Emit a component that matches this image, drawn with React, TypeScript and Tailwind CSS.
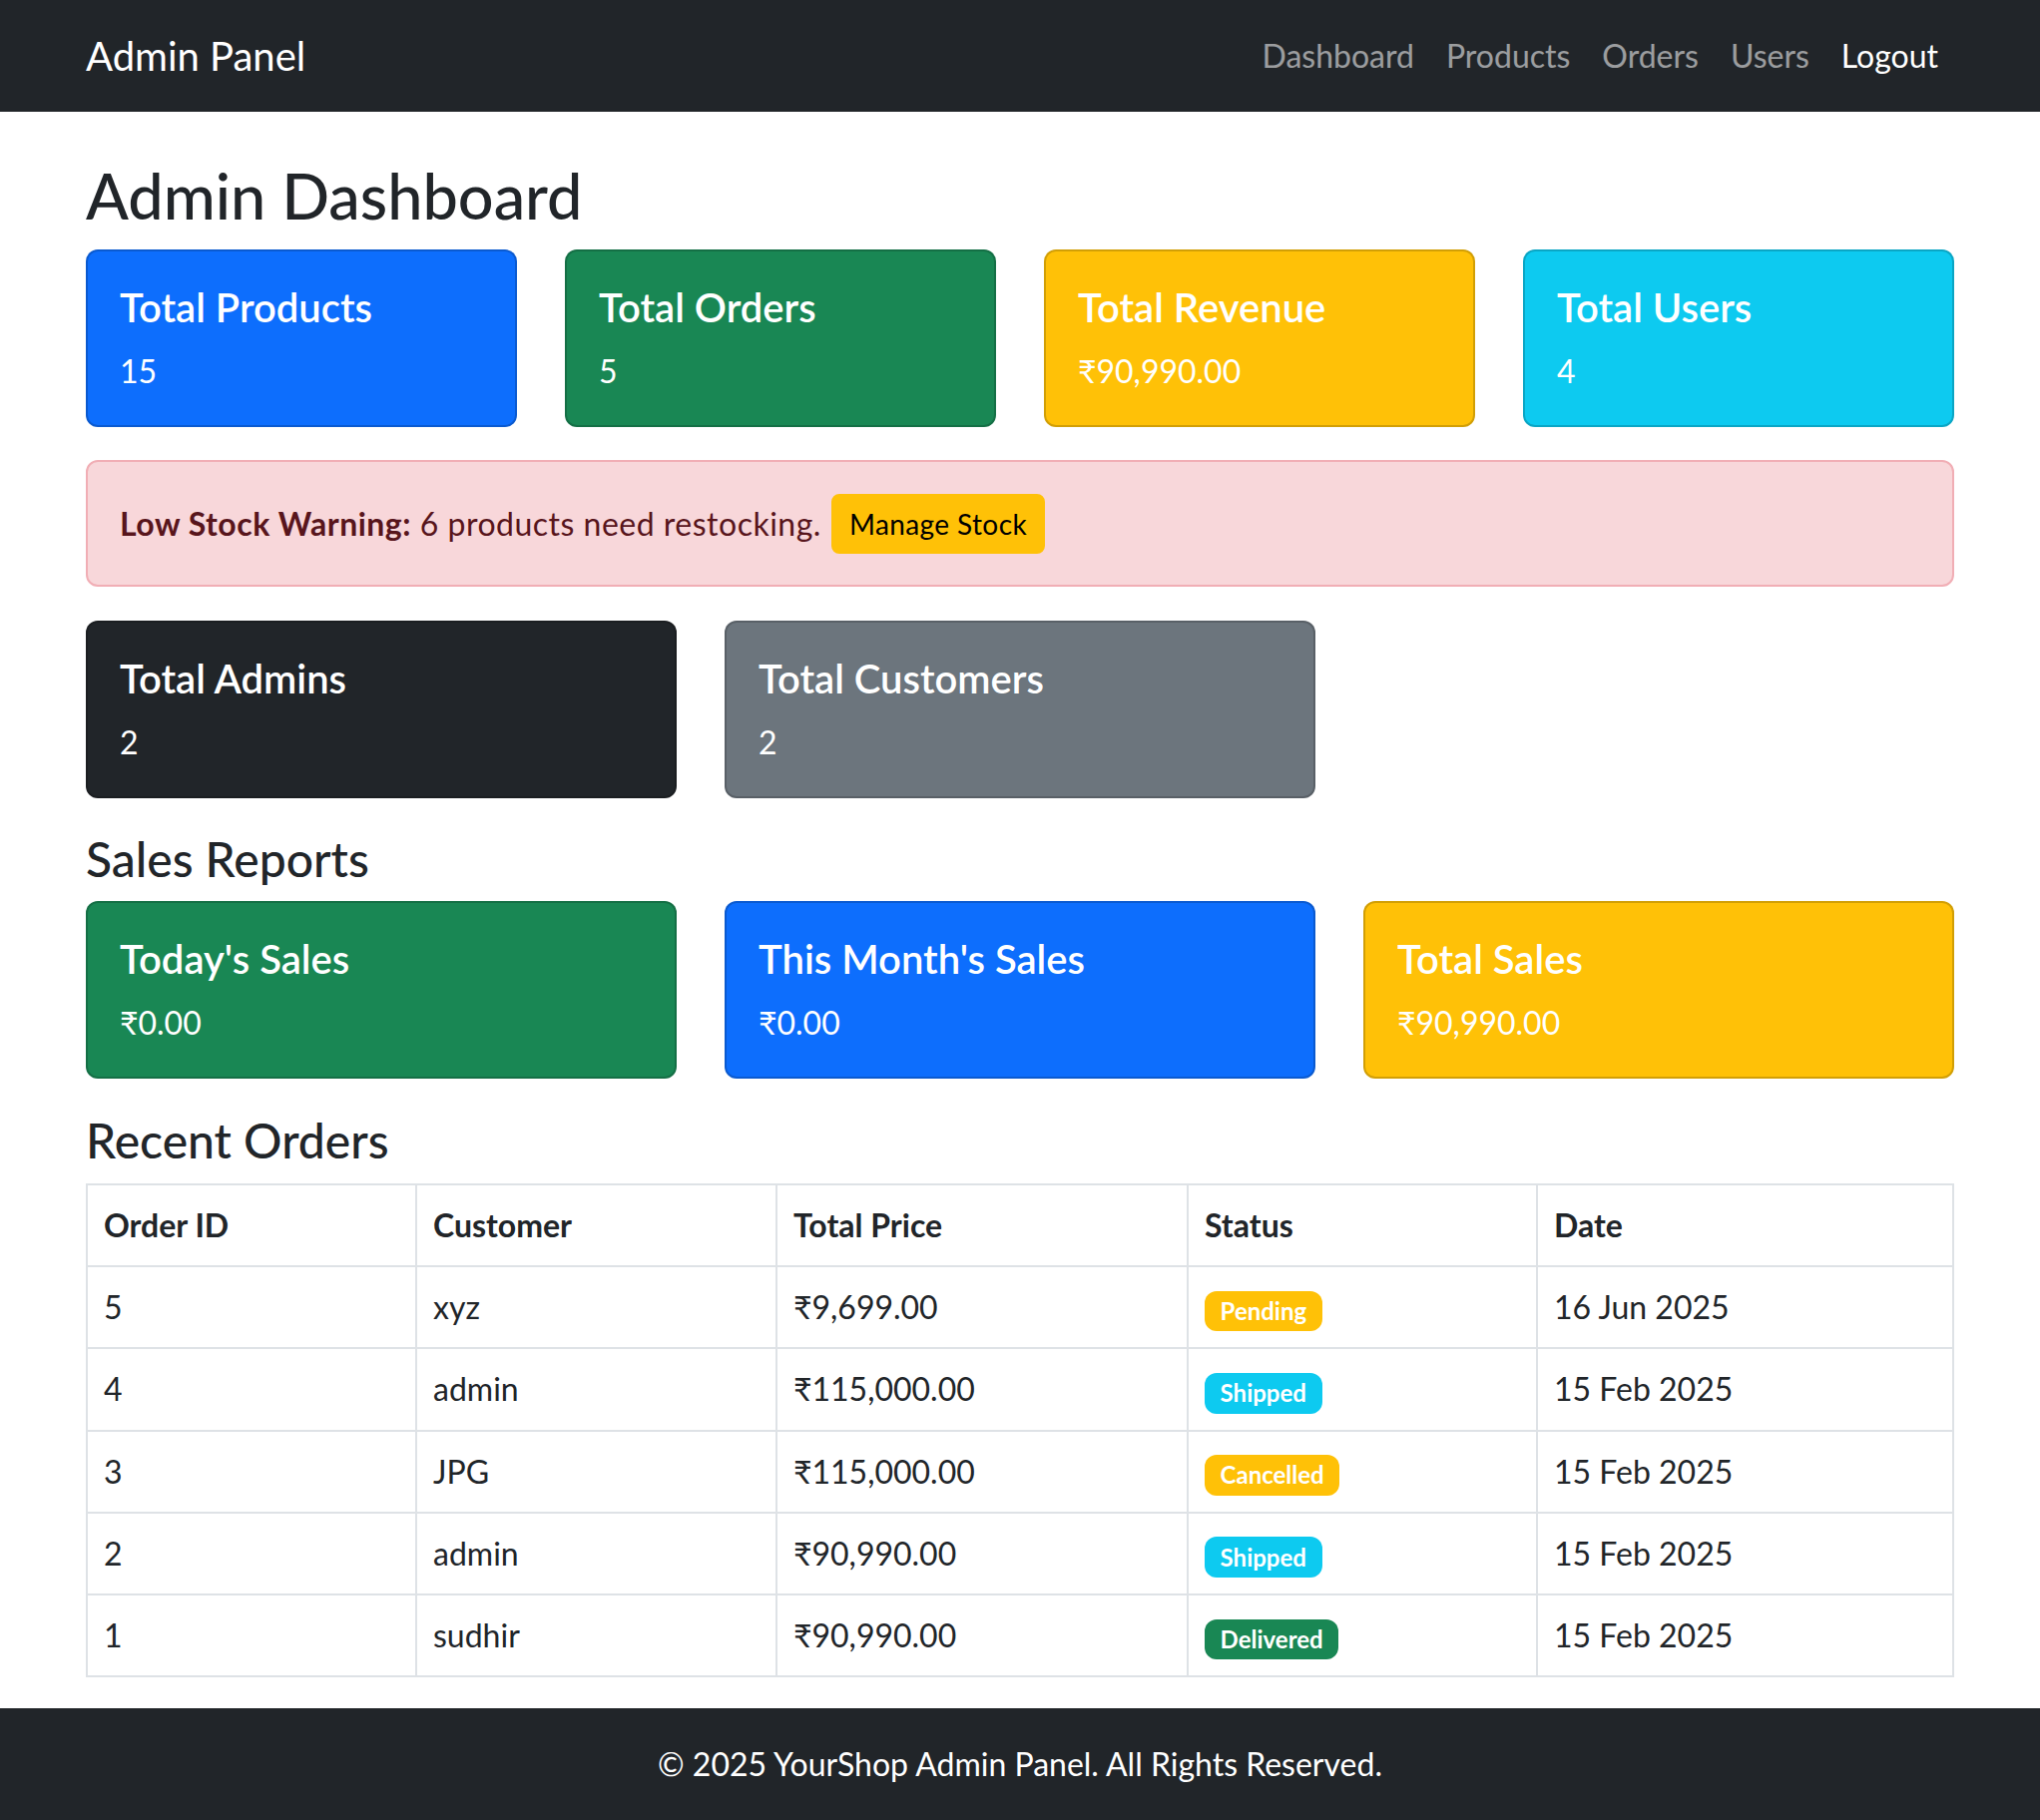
const font = { fontFamily: 'Lato, "Noto Sans", Arial, sans-serif' }

type Stat = { title: string; value: string; color: string }

const topStats: Stat[] = [
  { title: 'Total Products', value: '15', color: 'bg-[#0d6efd]' },
  { title: 'Total Orders', value: '5', color: 'bg-[#198754]' },
  { title: 'Total Revenue', value: '₹90,990.00', color: 'bg-[#ffc107]' },
  { title: 'Total Users', value: '4', color: 'bg-[#0dcaf0]' },
]

const userStats: Stat[] = [
  { title: 'Total Admins', value: '2', color: 'bg-[#212529]' },
  { title: 'Total Customers', value: '2', color: 'bg-[#6c757d]' },
]

const salesStats: Stat[] = [
  { title: "Today's Sales", value: '₹0.00', color: 'bg-[#198754]' },
  { title: "This Month's Sales", value: '₹0.00', color: 'bg-[#0d6efd]' },
  { title: 'Total Sales', value: '₹90,990.00', color: 'bg-[#ffc107]' },
]

const orders = [
  { id: 5, customer: 'xyz', total: '₹9,699.00', status: 'Pending', date: '16 Jun 2025' },
  { id: 4, customer: 'admin', total: '₹115,000.00', status: 'Shipped', date: '15 Feb 2025' },
  { id: 3, customer: 'JPG', total: '₹115,000.00', status: 'Cancelled', date: '15 Feb 2025' },
  { id: 2, customer: 'admin', total: '₹90,990.00', status: 'Shipped', date: '15 Feb 2025' },
  { id: 1, customer: 'sudhir', total: '₹90,990.00', status: 'Delivered', date: '15 Feb 2025' },
]

const badgeColor: Record<string, string> = {
  Pending: 'bg-[#ffc107]',
  Shipped: 'bg-[#0dcaf0]',
  Cancelled: 'bg-[#ffc107]',
  Delivered: 'bg-[#198754]',
}

function StatCard({ stat }: { stat: Stat }) {
  return (
    <div className={`${stat.color} rounded-[12px] border-2 border-black/[0.175] px-8 pt-8 pb-[30px] text-white`}>
      <h5 className="text-[40px] font-semibold leading-[48px] mb-4">{stat.title}</h5>
      <p className="text-[32px] leading-[48px]">{stat.value}</p>
    </div>
  )
}

export default function App() {
  const cell = 'border-2 border-[#dee2e6] px-4 py-4 text-[32px] leading-[48px] text-left align-middle'

  return (
    <div className="min-h-[1824px] flex flex-col bg-white text-[#212529]" style={font}>
      <nav className="h-[112px] bg-[#212529] shrink-0">
        <div className="max-w-[1920px] mx-auto px-6 h-full flex items-center justify-between">
          <span className="text-[40px] leading-[60px] text-white">Admin Panel</span>
          <ul className="flex">
            {['Dashboard', 'Products', 'Orders', 'Users'].map((l) => (
              <li key={l} className="px-4 text-[32px] leading-[48px] text-white/55">{l}</li>
            ))}
            <li className="px-4 text-[32px] leading-[48px] text-white">Logout</li>
          </ul>
        </div>
      </nav>

      <main className="flex-1 max-w-[1920px] w-full mx-auto px-6">
        <h1 className="text-[63px] font-medium leading-[76px] mt-[46px] mb-[16px]">Admin Dashboard</h1>

        <div className="grid grid-cols-4 gap-12">
          {topStats.map((s) => <StatCard key={s.title} stat={s} />)}
        </div>

        <div className="mt-[33px] h-[127px] rounded-[12px] border-2 border-[#f1aeb5] bg-[#f8d7da] px-8 flex items-center text-[#58151c]">
          <span className="text-[32px] leading-[48px] tracking-[0.5px]">
            <strong className="font-bold">Low Stock Warning:</strong> 6 products need restocking.
          </span>
          <button className="ml-[10px] h-[60px] px-4 rounded-[8px] border-2 border-[#ffc107] bg-[#ffc107] text-black text-[28px] leading-[42px] tracking-[0.4px]">
            Manage Stock
          </button>
        </div>

        <div className="grid grid-cols-3 gap-12 mt-[34px]">
          {userStats.map((s) => <StatCard key={s.title} stat={s} />)}
        </div>

        <h3 className="text-[48px] font-medium leading-[56px] mt-[33px] mb-[14px]">Sales Reports</h3>
        <div className="grid grid-cols-3 gap-12">
          {salesStats.map((s) => <StatCard key={s.title} stat={s} />)}
        </div>

        <h3 className="text-[48px] font-medium leading-[56px] mt-[34px] mb-[15px]">Recent Orders</h3>
        <table className="w-full table-fixed border-collapse mb-[30px]">
          <thead>
            <tr>
              <th className={`${cell} font-bold w-[330px]`}>Order ID</th>
              <th className={`${cell} font-bold w-[361px]`}>Customer</th>
              <th className={`${cell} font-bold w-[412px]`}>Total Price</th>
              <th className={`${cell} font-bold w-[350px]`}>Status</th>
              <th className={`${cell} font-bold`}>Date</th>
            </tr>
          </thead>
          <tbody>
            {orders.map((o) => (
              <tr key={o.id}>
                <td className={cell}>{o.id}</td>
                <td className={cell}>{o.customer}</td>
                <td className={cell}>{o.total}</td>
                <td className={cell}>
                  <span className={`${badgeColor[o.status]} inline-block align-middle rounded-[12px] px-[15.6px] py-[8.4px] text-[24px] font-bold leading-none text-white`}>
                    {o.status}
                  </span>
                </td>
                <td className={cell}>{o.date}</td>
              </tr>
            ))}
          </tbody>
        </table>
      </main>

      <footer className="bg-[#212529] py-8 text-center text-white text-[32px] leading-[48px] shrink-0">
        © 2025 YourShop Admin Panel. All Rights Reserved.
      </footer>
    </div>
  )
}
